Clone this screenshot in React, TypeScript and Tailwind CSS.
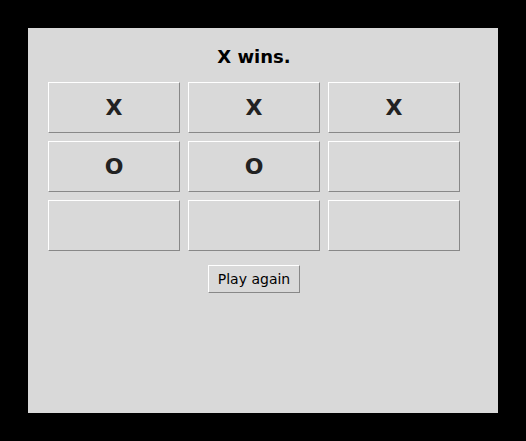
import React, { useState } from "react";

type Mark = "X" | "O" | "";

const start: Mark[] = ["X", "X", "X", "O", "O", "", "", "", ""];

export default function App() {
  const [board, setBoard] = useState<Mark[]>(start);

  return (
    <div className="w-[526px] h-[441px] bg-black pt-[28px] pl-[28px] font-['DejaVu_Sans',sans-serif]">
      <div className="w-[470px] h-[385px] bg-[#d9d9d9] pt-[18px] pl-[20px]">
        <div className="w-[412px] flex flex-col items-center">
          {/* status line */}
          <div className="text-[18px] leading-[21px] font-bold text-black">X wins.</div>

          {/* board */}
          <div className="mt-[15px] grid grid-cols-3 gap-[8px]">
            {board.map((m, i) => (
              <div
                key={i}
                className="w-[132px] h-[51px] flex items-center justify-center bg-[#d9d9d9] border border-t-white border-l-white border-b-[#888888] border-r-[#888888] text-[22px] leading-none font-bold text-[#222222] font-['DejaVu_Sans',sans-serif]"
              >
                {m}
              </div>
            ))}
          </div>

          <button
            onClick={() => setBoard(Array(9).fill(""))}
            className="mt-[14px] w-[92px] h-[28px] flex items-center justify-center bg-[#d9d9d9] border border-t-white border-l-white border-b-[#888888] border-r-[#888888] text-[14px] text-black"
          >
            Play again
          </button>
        </div>
      </div>
    </div>
  );
}
